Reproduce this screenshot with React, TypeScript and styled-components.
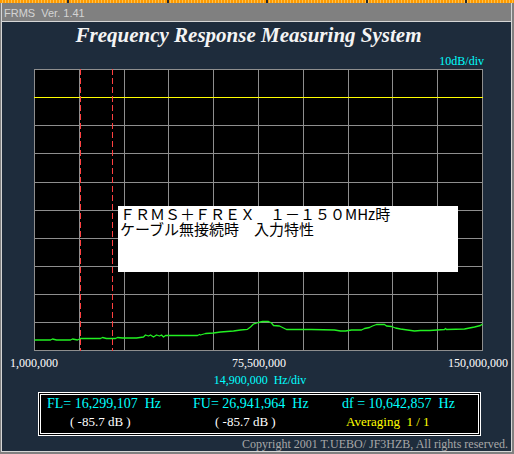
import React from "react";
import styled, { createGlobalStyle } from "styled-components";

const GlobalStyle = createGlobalStyle`
  html, body { margin: 0; padding: 0; background: #808080; }
  body { width: 514px; height: 454px; overflow: hidden; }
`;

const serif = `"Liberation Serif", "Times New Roman", serif`;

const Screen = styled.div`
  width: 514px;
  height: 454px;
  background: #808080;
  display: flex;
  flex-direction: column;
`;

const SelectionStrip = styled.div`
  flex: none;
  height: 3px;
  background:
    repeating-linear-gradient(90deg, transparent 0 67px, #2a2a2a 67px 69px, transparent 69px 99.6px),
    repeating-linear-gradient(90deg, #ff9a00 0 2px, #ffc24a 2px 3px);
`;

const Window = styled.div`
  flex: none;
  margin-left: 1px;
  width: 511px;
  box-sizing: border-box;
  border: 1px solid #d6d6d6;
  border-top: none;
  display: flex;
  flex-direction: column;
`;

const TitleBar = styled.div`
  height: 18px;
  border-bottom: 1px solid #d6d6d6;
  background: #808080;
  color: #d4d4d4;
  font: 11px/20px "Liberation Sans", Arial, sans-serif;
  padding-left: 2px;
  white-space: pre;
  overflow: hidden;
`;

const Panel = styled.div`
  height: 429px;
  background: #1e2c3c;
  display: flex;
  flex-direction: column;
  overflow: hidden;
  font-family: ${serif};
`;

const AppTitle = styled.div`
  margin-top: 1px;
  height: 24px;
  padding-right: 16px;
  text-align: center;
  font: italic bold 21px/24px ${serif};
  color: #f4f4f4;
`;

const ScaleLabel = styled.div<{ $align: "left" | "right" | "center"; $padL?: number; $padR?: number; $mt: number }>`
  margin-top: ${(p) => p.$mt}px;
  height: 14px;
  font-size: 12px;
  line-height: 14px;
  color: #00ffff;
  text-align: ${(p) => p.$align};
  padding-left: ${(p) => p.$padL ?? 0}px;
  padding-right: ${(p) => p.$padR ?? 0}px;
  white-space: pre;
`;

const PlotFrame = styled.div`
  position: relative;
  margin-top: 1px;
  margin-left: 32px;
  width: 449px;
  height: 282px;
  background: #000;
`;

const PlotSvg = styled.svg`
  display: block;
`;

const Annotation = styled.div`
  position: absolute;
  left: 84px;
  top: 137px;
  width: 340px;
  height: 66px;
  box-sizing: border-box;
  padding-left: 2px;
  background: #ffffff;
  color: #000;
  font: 15px/15px "Noto Sans CJK JP", "Noto Sans CJK SC", sans-serif;
  white-space: pre;
`;

const AxisRow = styled.div`
  margin-top: 5px;
  height: 14px;
  display: grid;
  grid-template-columns: 1fr auto 1fr;
  padding: 0 3px 0 8px;
  font-size: 12px;
  line-height: 14px;
  color: #ffffff;
`;

const AxisTick = styled.span<{ $justify: "start" | "center" | "end" }>`
  justify-self: ${(p) => p.$justify};
`;

const ReadoutOuter = styled.div`
  margin-top: 5px;
  margin-left: 36px;
  width: 443px;
  height: 44px;
  box-sizing: border-box;
  border: 1px solid #ffffff;
  padding: 1px;
  background: #000;
`;

const ReadoutInner = styled.div`
  height: 100%;
  box-sizing: border-box;
  border: 1px solid #ffffff;
  padding: 1px 0 0 6px;
  display: grid;
  grid-template-columns: 146px 149px 1fr;
  grid-template-rows: 16px 16px;
  row-gap: 2px;
`;

const Reading = styled.span`
  font-size: 14px;
  line-height: 16px;
  color: #00ffff;
  white-space: pre;
`;

const SubReading = styled.span<{ $indent: number; $color: string }>`
  padding-left: ${(p) => p.$indent}px;
  font-size: 13px;
  line-height: 16px;
  color: ${(p) => p.$color};
  white-space: pre;
`;

const Copyright = styled.div`
  margin-top: 2px;
  padding-right: 3px;
  text-align: right;
  font-size: 12px;
  line-height: 13px;
  color: #a8a8a8;
  white-space: pre;
`;

const W = 449;
const H = 282;
const vCols = [0, 45, 90, 134, 179, 224, 269, 314, 358, 403, 448];
const hRows = [0, 28, 56, 84, 113, 141, 169, 197, 225, 253, 281];

const trace: [number, number][] = [
  [0, 271], [16, 271], [18, 270], [22, 271], [36, 271], [38, 270], [43, 271], [46, 269.5],
  [66, 269.5], [68, 268.5], [72, 269.5], [81, 269.5], [83, 268.5], [88, 269], [102, 269],
  [109, 268], [111, 266], [114, 267], [116, 266], [119, 268], [122, 266], [125, 267],
  [127, 266], [129, 268], [131, 266.5], [163, 266.5], [165, 265.5], [166, 266], [171, 264.5],
  [179, 264], [186, 263], [199, 262], [206, 261], [213, 260.3], [216, 258], [219, 255],
  [224, 253.5], [228, 252.5], [234, 252.5], [237, 254], [239, 256.5], [245, 257], [248, 258.5],
  [252, 260.5], [277, 260.5], [300, 261], [306, 262], [311, 262], [317, 261], [327, 261],
  [330, 259.5], [335, 258.5], [338, 257], [342, 255.5], [350, 255.5], [352, 257], [357, 257.5],
  [361, 259], [366, 260], [373, 261], [380, 262], [386, 261.5], [395, 261.5], [410, 260.5],
  [411, 259.5], [412, 260.5], [430, 260], [440, 258], [446, 256.5], [448, 255],
];

function SpectrumPlot() {
  return (
    <PlotSvg width={W} height={H} viewBox={`0 0 ${W} ${H}`}>
      <g shapeRendering="crispEdges" stroke="#8e8e8e" strokeWidth={1}>
        {vCols.map((x) => (
          <line key={`v${x}`} x1={x + 0.5} y1={0} x2={x + 0.5} y2={H} />
        ))}
        {hRows.map((y, i) => (
          <line
            key={`h${y}`}
            x1={0}
            y1={y + 0.5}
            x2={W}
            y2={y + 0.5}
            stroke={i === 1 ? "#ffff00" : "#8e8e8e"}
          />
        ))}
      </g>
      <g shapeRendering="crispEdges" stroke="#ff4040" strokeWidth={1} strokeDasharray="6 3">
        <line x1={46.5} y1={0} x2={46.5} y2={H} />
        <line x1={78.5} y1={0} x2={78.5} y2={H} />
      </g>
      <polyline
        points={trace.map(([x, y]) => `${x + 0.5},${y}`).join(" ")}
        fill="none"
        stroke="#22f022"
        strokeWidth={1.3}
        strokeLinejoin="round"
      />
    </PlotSvg>
  );
}

export default function App() {
  return (
    <>
      <GlobalStyle />
      <Screen>
        <SelectionStrip />
        <Window>
          <TitleBar>{"FRMS  Ver. 1.41"}</TitleBar>
          <Panel>
            <AppTitle>Frequency Response Measuring System</AppTitle>
            <ScaleLabel $align="right" $padR={27} $mt={7}>10dB/div</ScaleLabel>
            <PlotFrame>
              <SpectrumPlot />
              <Annotation>
                {"ＦＲＭＳ＋ＦＲＥＸ　１－１５０MHz時\nケーブル無接続時　入力特性"}
              </Annotation>
            </PlotFrame>
            <AxisRow>
              <AxisTick $justify="start">1,000,000</AxisTick>
              <AxisTick $justify="center">75,500,000</AxisTick>
              <AxisTick $justify="end">150,000,000</AxisTick>
            </AxisRow>
            <ScaleLabel $align="center" $padL={7} $mt={3}>{"14,900,000  Hz/div"}</ScaleLabel>
            <ReadoutOuter>
              <ReadoutInner>
                <Reading>{"FL= 16,299,107  Hz"}</Reading>
                <Reading>{"FU= 26,941,964  Hz"}</Reading>
                <Reading>{"df = 10,642,857  Hz"}</Reading>
                <SubReading $indent={23} $color="#ffffff">{"( -85.7 dB )"}</SubReading>
                <SubReading $indent={22} $color="#ffffff">{"( -85.7 dB )"}</SubReading>
                <SubReading $indent={4} $color="#ffff00">{"Averaging  1 / 1"}</SubReading>
              </ReadoutInner>
            </ReadoutOuter>
            <Copyright>Copyright 2001 T.UEBO/ JF3HZB, All rights reserved.</Copyright>
          </Panel>
        </Window>
      </Screen>
    </>
  );
}
